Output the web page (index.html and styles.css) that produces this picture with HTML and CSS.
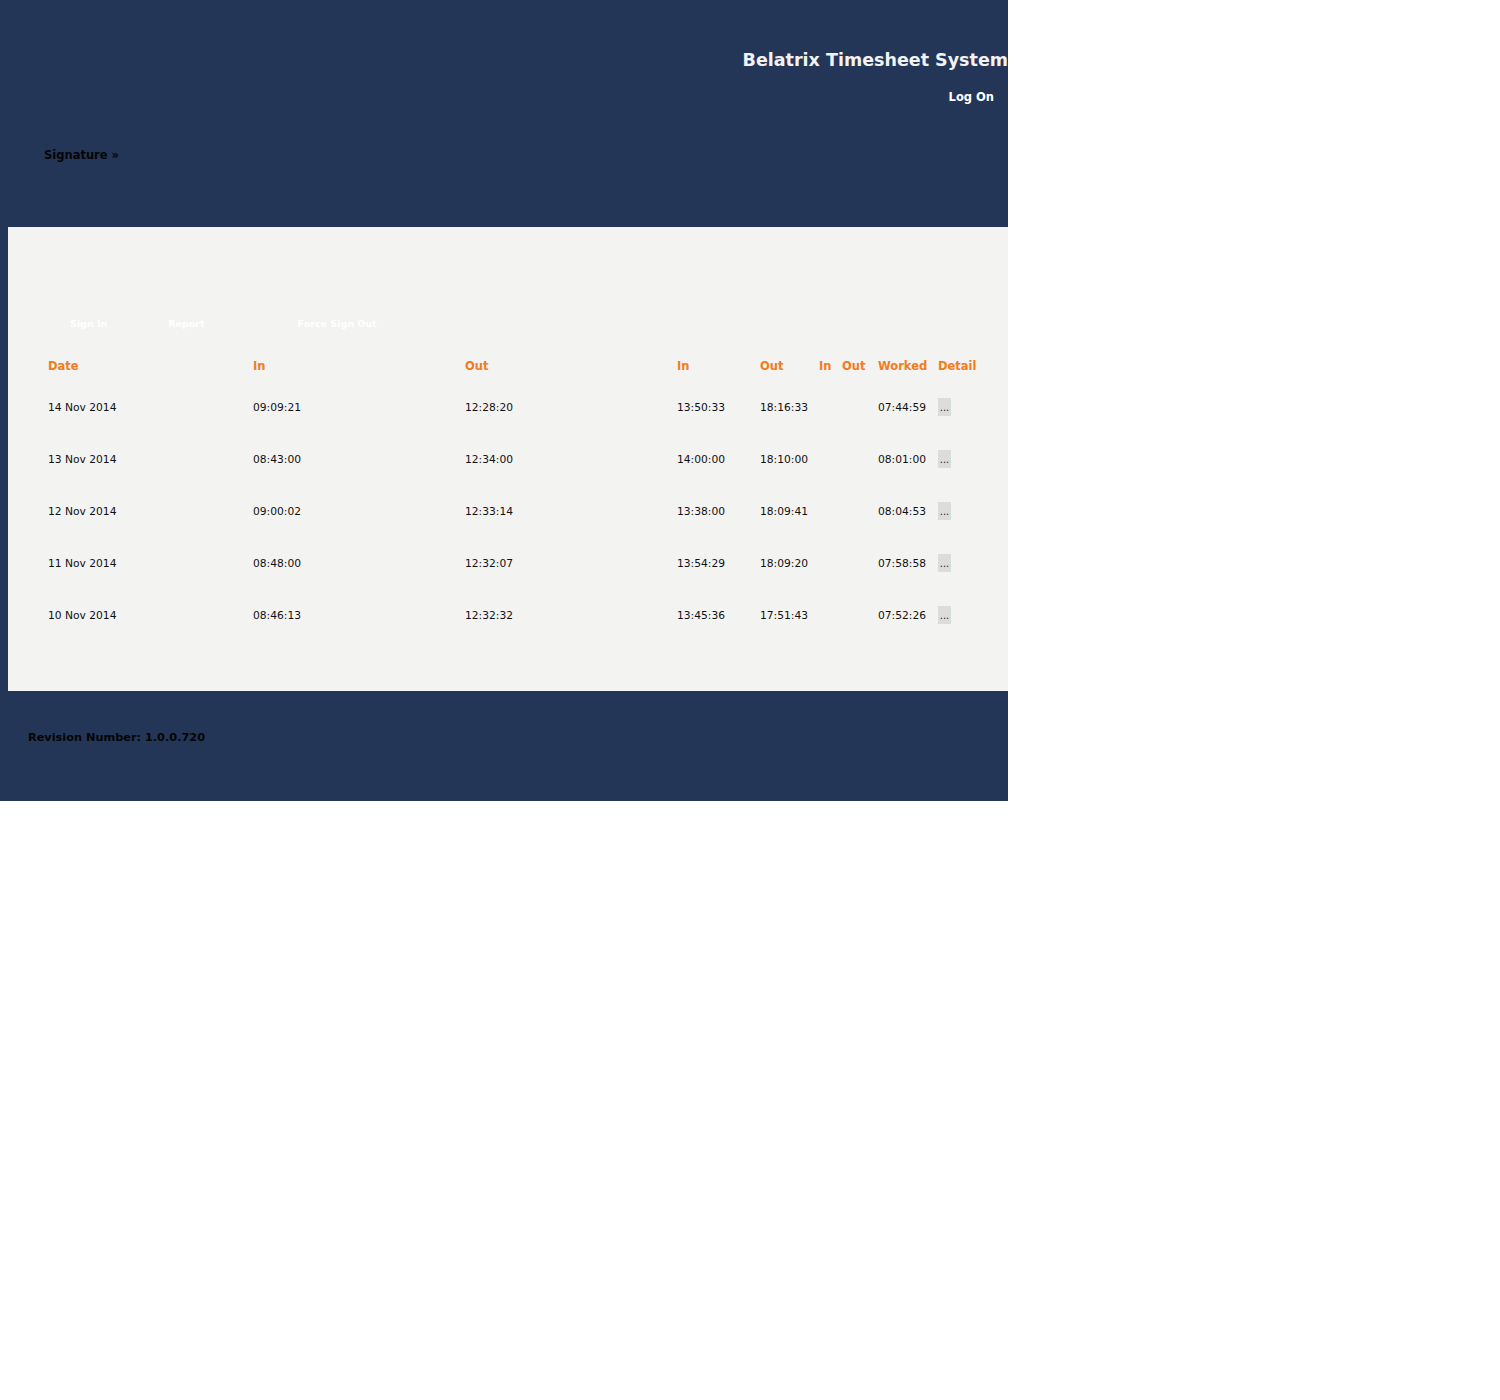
FILE: index.html
```html
<!DOCTYPE html>
<html>
<head>
<meta charset="utf-8">
<title>Belatrix Timesheet System</title>
<link rel="stylesheet" href="styles.css">
</head>
<body>
<div class="page">
  <header class="header">
    <h1 class="title">Belatrix Timesheet System</h1>
    <div class="logon"><a href="#">Log On</a></div>
    <nav class="menu"><a href="#">Signature »</a></nav>
  </header>
  <main class="main">
    <div class="actions">
      <span class="btn">Sign In</span>
      <span class="btn btn-report">Report</span>
      <span class="btn btn-force">Force Sign Out</span>
    </div>
    <table class="grid">
      <colgroup>
        <col class="c-date"><col class="c-in1"><col class="c-out1"><col class="c-in2"><col class="c-out2"><col class="c-in3"><col class="c-out3"><col class="c-worked"><col class="c-detail">
      </colgroup>
      <thead>
        <tr><th>Date</th><th>In</th><th>Out</th><th>In</th><th>Out</th><th>In</th><th>Out</th><th>Worked</th><th>Detail</th></tr>
      </thead>
      <tbody>
        <tr><td>14 Nov 2014</td><td>09:09:21</td><td>12:28:20</td><td>13:50:33</td><td>18:16:33</td><td></td><td></td><td>07:44:59</td><td><span class="dots">...</span></td></tr>
        <tr><td>13 Nov 2014</td><td>08:43:00</td><td>12:34:00</td><td>14:00:00</td><td>18:10:00</td><td></td><td></td><td>08:01:00</td><td><span class="dots">...</span></td></tr>
        <tr><td>12 Nov 2014</td><td>09:00:02</td><td>12:33:14</td><td>13:38:00</td><td>18:09:41</td><td></td><td></td><td>08:04:53</td><td><span class="dots">...</span></td></tr>
        <tr><td>11 Nov 2014</td><td>08:48:00</td><td>12:32:07</td><td>13:54:29</td><td>18:09:20</td><td></td><td></td><td>07:58:58</td><td><span class="dots">...</span></td></tr>
        <tr><td>10 Nov 2014</td><td>08:46:13</td><td>12:32:32</td><td>13:45:36</td><td>17:51:43</td><td></td><td></td><td>07:52:26</td><td><span class="dots">...</span></td></tr>
      </tbody>
    </table>
  </main>
  <footer class="footer">Revision Number: 1.0.0.720</footer>
</div>
</body>
</html>
```
FILE: styles.css
```css
html, body {
  margin: 0;
  padding: 0;
  background: #ffffff;
}
body {
  font-family: "DejaVu Sans", "Liberation Sans", sans-serif;
  color: #111111;
}
.page {
  width: 1008px;
  background: #233657;
}
.header {
  height: 227px;
  box-sizing: border-box;
  padding-top: 48px;
}
.title {
  margin: 0;
  text-align: right;
  font-size: 17.5px;
  line-height: 24px;
  font-weight: bold;
  color: #f2f2f2;
  white-space: nowrap;
}
.logon {
  margin-top: 17px;
  text-align: right;
  padding-right: 14px;
  font-size: 11.5px;
  line-height: 16px;
  font-weight: bold;
}
.logon a {
  color: #ffffff;
  text-decoration: none;
}
.menu {
  margin-top: 42px;
  padding-left: 44px;
  font-size: 11.5px;
  line-height: 16px;
  font-weight: bold;
}
.menu a {
  color: #050505;
  text-decoration: none;
}
.main {
  margin-left: 8px;
  width: 1000px;
  height: 464px;
  box-sizing: border-box;
  background: #f3f3f1;
  padding-top: 86px;
  padding-left: 40px;
}
.actions {
  display: flex;
  align-items: center;
  height: 20px;
  padding-left: 22px;
  font-size: 9.5px;
  font-weight: bold;
  color: #ffffff;
}
.btn-report {
  margin-left: 61px;
}
.btn-force {
  margin-left: 93px;
}
.grid {
  margin-top: 17px;
  border-collapse: collapse;
  table-layout: fixed;
  width: 940px;
}
.c-date { width: 205px; }
.c-in1 { width: 212px; }
.c-out1 { width: 212px; }
.c-in2 { width: 83px; }
.c-out2 { width: 59px; }
.c-in3 { width: 23px; }
.c-out3 { width: 36px; }
.c-worked { width: 60px; }
.c-detail { width: 50px; }
.grid th {
  height: 31px;
  padding: 0;
  text-align: left;
  font-size: 11.5px;
  font-weight: bold;
  color: #f47b20;
  white-space: nowrap;
}
.grid td {
  height: 52px;
  padding: 0;
  font-size: 10.7px;
  color: #111111;
  white-space: nowrap;
  vertical-align: middle;
}
.dots {
  display: inline-block;
  width: 13px;
  height: 18px;
  line-height: 20px;
  text-align: center;
  background: #dcdcdc;
  font-size: 10px;
  color: #222222;
  vertical-align: middle;
}
.footer {
  height: 110px;
  box-sizing: border-box;
  padding-top: 39px;
  padding-left: 28px;
  font-size: 11.3px;
  line-height: 16px;
  font-weight: bold;
  color: #050505;
}
```
